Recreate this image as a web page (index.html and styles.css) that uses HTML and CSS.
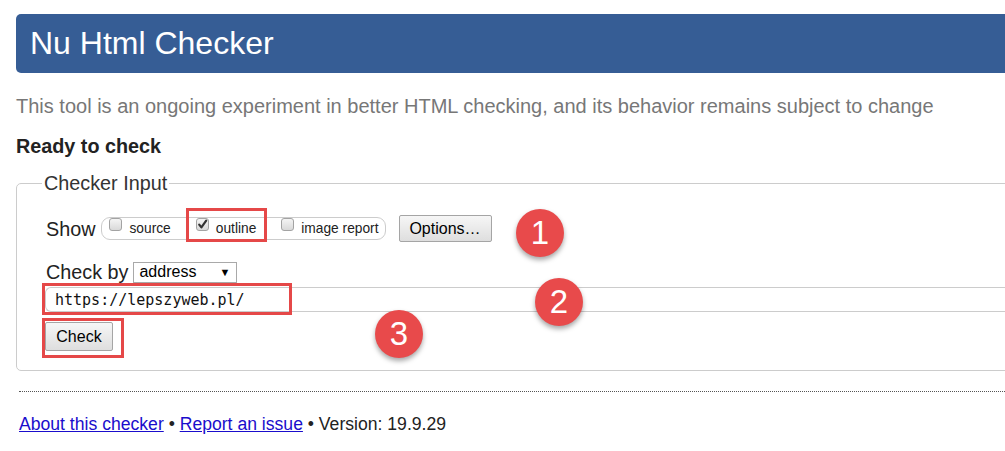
FILE: index.html
```html
<!DOCTYPE html>
<html lang="en">
<head>
<meta charset="utf-8">
<title>Nu Html Checker</title>
<link rel="stylesheet" href="styles.css">
</head>
<body>
<div class="page">
  <header class="banner"><h1 class="banner-title">Nu Html Checker</h1></header>
  <p class="tagline">This tool is an ongoing experiment in better HTML checking, and its behavior remains subject to change</p>
  <h2 class="status">Ready to check</h2>
  <form class="form" onsubmit="return false">
    <fieldset class="checker">
      <legend class="legend">Checker Input</legend>
      <div class="row show-row">
        <span class="row-label">Show</span>
        <div class="pill">
          <label class="opt"><span class="cb"></span><span class="opt-text">source</span></label>
          <label class="opt"><span class="cb"><svg class="tick" viewBox="0 0 13 13" width="13" height="13"><path d="M3.2 6.6 L5.4 9.4 L10.2 2.6" fill="none" stroke="#333" stroke-width="2.2" stroke-linecap="round" stroke-linejoin="round"/></svg></span><span class="opt-text">outline</span></label>
          <label class="opt"><span class="cb"></span><span class="opt-text">image report</span></label>
        </div>
        <button type="button" class="btn btn-options">Options…</button>
      </div>
      <div class="row by-row">
        <span class="row-label">Check by</span>
        <div class="select"><span class="select-value">address</span><span class="select-arrow">▼</span></div>
      </div>
      <input class="url" type="text" value="https://lepszyweb.pl/">
      <div class="submit-row"><button type="button" class="btn btn-check">Check</button></div>
    </fieldset>
  </form>
  <hr class="rule">
  <p class="footer"><a href="#">About this checker</a> • <a href="#">Report an issue</a> • Version: 19.9.29</p>

  <div class="mark mark-outline"></div>
  <div class="mark mark-url"></div>
  <div class="mark mark-check"></div>
  <div class="badge badge-1">1</div>
  <div class="badge badge-2">2</div>
  <div class="badge badge-3">3</div>
</div>
</body>
</html>
```

FILE: styles.css
```css
html, body {
  margin: 0;
  padding: 0;
  overflow: hidden;
  background: #fff;
}
body {
  font-family: "Liberation Sans", Arial, sans-serif;
  color: #222;
}
.page {
  position: relative;
  width: 1005px;
  height: 451px;
  padding: 14px 0 0 16px;
  box-sizing: border-box;
  overflow: hidden;
}
.banner {
  background: #365d95;
  border-radius: 5px;
  height: 59px;
  padding-left: 14px;
  margin-right: -12px;
}
.banner-title {
  margin: 0;
  font-weight: normal;
  font-size: 32px;
  line-height: 59px;
  color: #fff;
}
.tagline {
  margin: 21px 0 0 0;
  font-size: 20px;
  line-height: 24px;
  color: #777;
  white-space: nowrap;
}
.status {
  margin: 16px 0 0 0;
  font-size: 19.8px;
  line-height: 24px;
  font-weight: bold;
  color: #222;
}
.form {
  margin: 13px -12px 0 0;
}
.checker {
  margin: 0;
  border: 1px solid #ccc;
  border-radius: 5px;
  padding: 20px 0 19px 28px;
  min-width: 0;
  overflow: hidden;
}
.legend {
  font-size: 19.8px;
  line-height: 24px;
  color: #333;
  padding: 0 2px;
  margin-left: -3px;
}
.row {
  display: flex;
  align-items: center;
}
.show-row {
  height: 27px;
}
.row-label {
  font-size: 19.8px;
  line-height: 24px;
  color: #222;
  margin-left: 1px;
}
.pill {
  display: flex;
  align-items: flex-start;
  gap: 25px;
  margin-left: 6px;
  height: 23px;
  box-sizing: border-box;
  border: 1px solid #ccc;
  border-radius: 9px;
  padding: 0 6px 0 7px;
}
.opt {
  display: flex;
  align-items: flex-start;
  font-size: 13.75px;
  line-height: 21px;
  color: #222;
}
.cb {
  display: block;
  width: 13px;
  height: 13px;
  box-sizing: border-box;
  border: 1px solid #a3a3a3;
  border-radius: 3px;
  background: linear-gradient(#f4f4f4, #d9d9d9);
  margin-right: 7px;
}
.tick {
  display: block;
  margin: -1px 0 0 -1px;
}
.btn {
  font-family: "Liberation Sans", Arial, sans-serif;
  font-size: 16px;
  color: #000;
  background: linear-gradient(#f6f6f6, #dedede);
  border: 1px solid #a5a5a5;
  border-radius: 2px;
  padding: 0;
  box-sizing: border-box;
}
.btn-options {
  margin-left: 13px;
  width: 93px;
  height: 27px;
}
.by-row {
  margin-top: 18px;
  height: 24px;
}
.select {
  display: flex;
  align-items: center;
  justify-content: space-between;
  margin-left: 5px;
  width: 104px;
  height: 21px;
  box-sizing: border-box;
  border: 1px solid #a9a9a9;
  padding: 0 6px 0 5px;
  font-size: 16px;
  color: #000;
}
.select-arrow {
  font-size: 11px;
}
.url {
  display: block;
  margin: 3px 0 0 0;
  width: 100%;
  height: 25px;
  box-sizing: border-box;
  border: 1px solid #ccc;
  border-right: 0;
  border-radius: 6px 0 0 6px;
  padding: 0 0 0 9px;
  font-family: "DejaVu Sans Mono", "Liberation Mono", monospace;
  font-size: 15px;
  color: #111;
  outline: none;
}
.submit-row {
  margin-top: 10px;
  display: flex;
}
.btn-check {
  width: 68px;
  height: 29px;
}
.rule {
  margin: 20px 0 0 3px;
  border: 0;
  border-top: 1px dotted #555;
  height: 0;
}
.footer {
  margin: 21px 0 0 3px;
  font-size: 17.6px;
  line-height: 22px;
  color: #222;
}
.footer a {
  color: #1a0dcc;
}
.mark {
  position: absolute;
  box-sizing: border-box;
  border: 3px solid #e54848;
}
.mark-outline { left: 186px; top: 208px; width: 81px; height: 34px; }
.mark-url { left: 42px; top: 283px; width: 250px; height: 32px; }
.mark-check { left: 42px; top: 318px; width: 82px; height: 40px; }
.badge {
  position: absolute;
  width: 48px;
  height: 48px;
  border-radius: 50%;
  background: #e84a4b;
  color: #fff;
  font-size: 33px;
  line-height: 48px;
  text-align: center;
  box-shadow: 0 3px 5px rgba(0, 0, 0, 0.35);
}
.badge-1 { left: 516px; top: 209px; }
.badge-2 { left: 535px; top: 278px; }
.badge-3 { left: 375px; top: 310px; }
```
